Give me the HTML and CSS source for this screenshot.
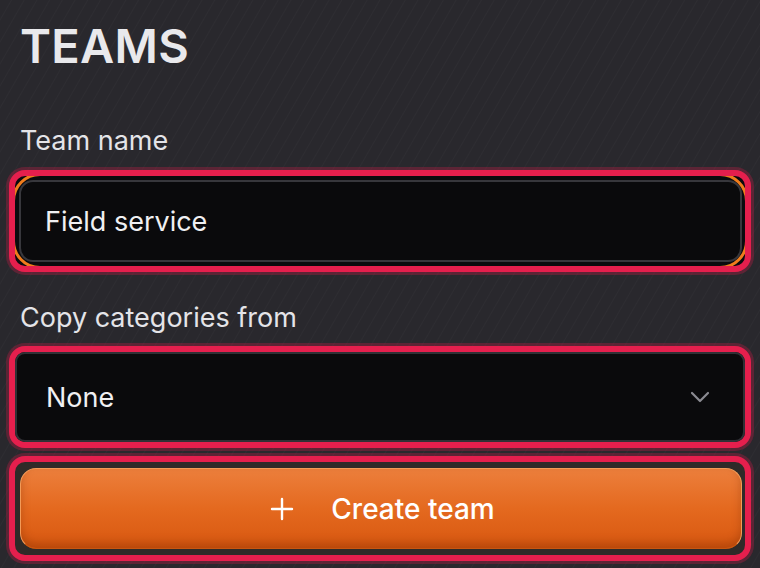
FILE: index.html
```html
<html>
<head>
	<title>Teams</title>
	<link rel="stylesheet" href="styles.css">
</head>
<body>
	<div class="container">
		<h1 class="title">TEAMS</h1>

		<div class="label">Team name</div>
		<div class="ring ring-input">
			<div class="field">Field service</div>
		</div>

		<div class="label label-copy">Copy categories from</div>
		<div class="ring ring-select">
			<div class="field select">
				<span>None</span>
				<svg class="chevron" width="20" height="12" viewBox="0 0 20 12">
					<path d="M2 2 L10 10 L18 2" fill="none" stroke="#8b8b92" stroke-width="2.2" stroke-linecap="round" stroke-linejoin="round"/>
				</svg>
			</div>
		</div>

		<div class="ring ring-button">
			<div class="button">
				<svg class="plus" width="24" height="24" viewBox="0 0 24 24">
					<path d="M12 2 V22 M2 12 H22" fill="none" stroke="#fff" stroke-width="2.4" stroke-linecap="round"/>
				</svg>
				<span>Create team</span>
			</div>
		</div>
	</div>
</body>
</html>
```

FILE: styles.css
```css
body {
    margin: 0;
    height: 568px;
    overflow: hidden;
    background-color: #29282d;
    background-image: repeating-linear-gradient(120deg, rgba(255,255,255,0) 0px, rgba(255,255,255,0) 9px, rgba(255,255,255,0.025) 10px, rgba(255,255,255,0) 11px);
    font-family: Inter, "Noto Sans", sans-serif;
    color: #e7e7ea;
}

.container {
    padding: 0 9px;
}

.title {
    margin: 0;
    padding: 20px 0 0 11px;
    font-size: 47px;
    line-height: 52px;
    font-weight: 600;
    letter-spacing: 0.3px;
    color: #e9e9ec;
}

.label {
    padding: 52px 0 0 11px;
    font-size: 27px;
    line-height: 34px;
    font-weight: 400;
    color: #e4e4e8;
}

.label-copy {
    padding-top: 29px;
}

.ring {
    margin-top: 12px;
    border: 6px solid #e51f4d;
    border-radius: 16px;
    box-shadow: 0 0 0 3px rgba(190, 30, 70, 0.35);
}

.ring-input {
    position: relative;
    overflow: hidden;
    padding: 4px 3px 4px 4px;
    background: #0b0b0e;
}

/* orange corners of the focused field, clipped by the ring */
.ring-input::before {
    content: "";
    position: absolute;
    top: -3px;
    left: -3px;
    right: -3px;
    bottom: -3px;
    border: 3px solid #f07c1c;
    border-radius: 28px;
}

.field {
    position: relative;
    height: 78px;
    display: flex;
    align-items: center;
    padding: 0 24px;
    background: #0a0a0c;
    border: 2px solid #37373c;
    border-radius: 14px;
    font-size: 27px;
    color: #f0f0f2;
}

.ring-select {
    margin-top: 11px;
    padding: 0;
    background: #0a0a0c;
}

.select {
    height: 86px;
    justify-content: space-between;
    padding: 0 33px 0 29px;
    border-color: #303035;
    border-radius: 10px;
}

.ring-button {
    margin-top: 8px;
    padding: 6px 3px 6px 5px;
    background: #2f2a28;
}

.button {
    height: 79px;
    display: flex;
    align-items: center;
    justify-content: center;
    gap: 37px;
    padding-left: 3px;
    border: 1px solid #f39a57;
    border-bottom-color: #c8560f;
    border-radius: 16px;
    background: linear-gradient(#ec7f3c, #e4691f 50%, #d85810);
    box-shadow: inset 0 -5px 8px rgba(120, 40, 0, 0.35);
    font-size: 28px;
    font-weight: 500;
    color: #fff;
}
```
